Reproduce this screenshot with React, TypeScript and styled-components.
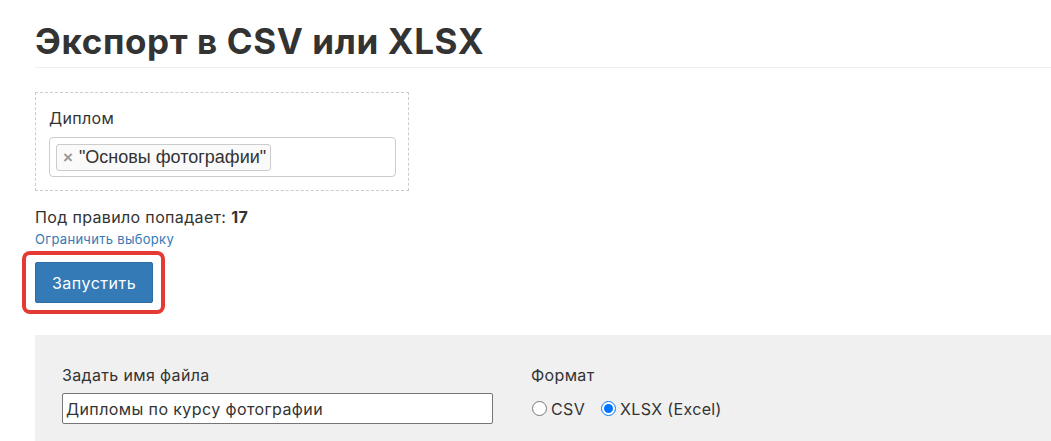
import styled, { createGlobalStyle } from 'styled-components';

const GlobalStyle = createGlobalStyle`
  body {
    margin: 0;
    background: #fff;
    font-family: 'Inter', 'Noto Sans', sans-serif;
    letter-spacing: 0.35px;
    color: #333;
    overflow: hidden;
  }
`;

const Page = styled.div`
  padding-left: 35px;
`;

const Title = styled.h1`
  margin: 21px 0 0;
  padding-bottom: 6px;
  font-size: 35px;
  line-height: 40px;
  font-weight: 700;
  letter-spacing: 0.6px;
  color: #333;
  border-bottom: 1px solid #eee;
`;

const FilterBox = styled.div`
  margin-top: 24px;
  width: 347px;
  padding: 15px 12px 13px 13px;
  border: 1px dashed #ccc;
`;

const FieldLabel = styled.div`
  font-size: 16px;
  line-height: 20px;
  margin-bottom: ${(props: { $gap: number }) => props.$gap}px;
`;

const Select = styled.div`
  box-sizing: border-box;
  height: 40px;
  padding: 6px;
  border: 1px solid #ccc;
  border-radius: 4px;
  display: flex;
  align-items: flex-start;
`;

const Tag = styled.span`
  box-sizing: border-box;
  height: 27px;
  display: inline-flex;
  align-items: center;
  gap: 6px;
  padding: 0 4px 0 6px;
  border: 1px solid #ccc;
  border-radius: 3px;
  background: #fafafa;
  font-family: 'Liberation Sans', Arial, sans-serif;
  font-size: 18px;
  letter-spacing: 0;
  color: #333;
`;

const Remove = styled.span`
  color: #999;
  font-weight: 700;
  font-size: 17px;
`;

const Count = styled.div`
  margin-top: 16px;
  font-size: 16px;
  line-height: 20px;
  b {
    font-weight: 700;
  }
`;

const Link = styled.a`
  display: block;
  margin-top: 4px;
  font-size: 13px;
  line-height: 16px;
  letter-spacing: 0.3px;
  color: #337ab7;
  text-decoration: none;
`;

const Highlight = styled.div`
  display: inline-block;
  margin: 4px 0 0 -13px;
  padding: 7px 8px 7px 9px;
  border: 4px solid #e53935;
  border-radius: 8px;
`;

const Button = styled.button`
  display: block;
  width: 118px;
  height: 41px;
  border: 1px solid #2e6da4;
  border-radius: 2px;
  background: #337ab7;
  color: #fff;
  font-family: 'Inter', sans-serif;
  font-size: 16px;
  letter-spacing: 0.5px;
  cursor: pointer;
`;

const Panel = styled.div`
  margin-top: 21px;
  height: 120px;
  padding: 30px 0 0 27px;
  background: #f0f0f0;
  display: flex;
  gap: 38px;
`;

const Column = styled.div`
  width: ${(props: { $width?: number }) => (props.$width ? `${props.$width}px` : 'auto')};
`;

const TextInput = styled.input`
  box-sizing: border-box;
  width: 431px;
  height: 31px;
  padding: 0 3px;
  border: 1px solid #767676;
  border-radius: 2px;
  background: #fff;
  font-family: 'Inter', sans-serif;
  font-size: 16px;
  letter-spacing: 0.4px;
  color: #333;
`;

const Radios = styled.div`
  display: flex;
  align-items: center;
  height: 31px;
  gap: 15px;
`;

const RadioLabel = styled.label`
  display: inline-flex;
  align-items: center;
  gap: 4px;
  font-size: 16px;
  input {
    margin: 0 0 0 1px;
    width: 15px;
    height: 15px;
  }
`;

function App() {
  return (
    <>
      <GlobalStyle />
      <Page>
        <Title>Экспорт в CSV или XLSX</Title>
        <FilterBox>
          <FieldLabel $gap={9}>Диплом</FieldLabel>
          <Select>
            <Tag>
              <Remove>×</Remove>"Основы фотографии"
            </Tag>
          </Select>
        </FilterBox>
        <Count>
          Под правило попадает: <b>17</b>
        </Count>
        <Link href="#">Ограничить выборку</Link>
        <Highlight>
          <Button>Запустить</Button>
        </Highlight>
        <Panel>
          <Column $width={431}>
            <FieldLabel $gap={8}>Задать имя файла</FieldLabel>
            <TextInput defaultValue="Дипломы по курсу фотографии" />
          </Column>
          <Column>
            <FieldLabel $gap={8}>Формат</FieldLabel>
            <Radios>
              <RadioLabel>
                <input type="radio" name="format" />
                CSV
              </RadioLabel>
              <RadioLabel>
                <input type="radio" name="format" defaultChecked />
                XLSX (Excel)
              </RadioLabel>
            </Radios>
          </Column>
        </Panel>
      </Page>
    </>
  );
}

export default App;
